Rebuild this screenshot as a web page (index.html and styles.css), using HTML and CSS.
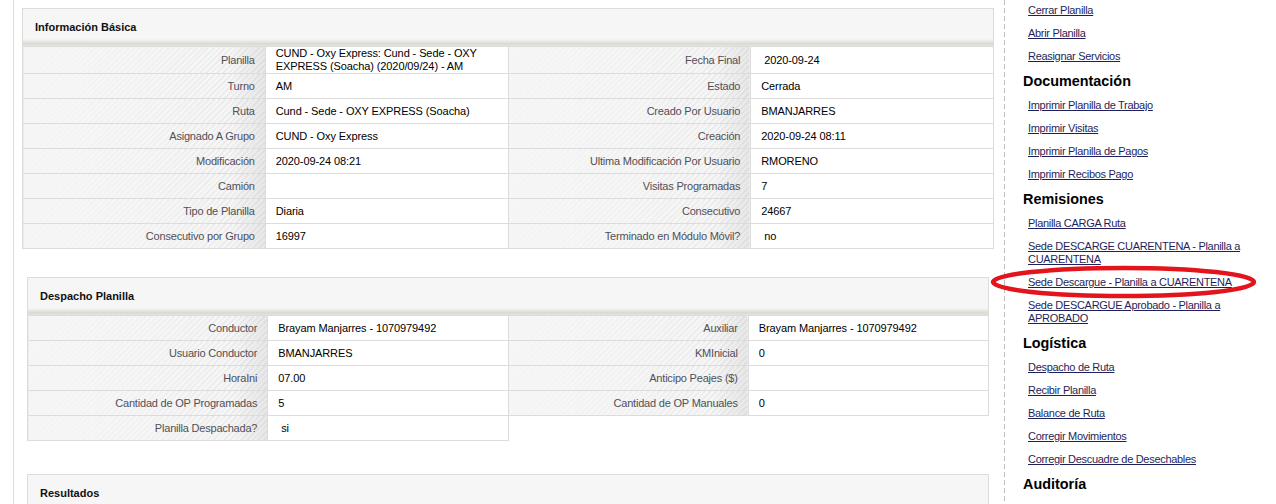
FILE: index.html
```html
<!DOCTYPE html>
<html lang="es">
<head>
<meta charset="utf-8">
<title>Planilla</title>
<link rel="stylesheet" href="styles.css">
</head>
<body>
<div class="layout">
  <main class="main">
    <section class="panel panel-basic">
      <div class="panel-header">Información Básica</div>
      <table class="info">
        <tr>
          <td class="label">Planilla</td>
          <td class="value">CUND - Oxy Express: Cund - Sede - OXY EXPRESS (Soacha) (2020/09/24) - AM</td>
          <td class="label">Fecha Final</td>
          <td class="value">&nbsp;2020-09-24</td>
        </tr>
        <tr>
          <td class="label">Turno</td>
          <td class="value">AM</td>
          <td class="label">Estado</td>
          <td class="value">Cerrada</td>
        </tr>
        <tr>
          <td class="label">Ruta</td>
          <td class="value">Cund - Sede - OXY EXPRESS (Soacha)</td>
          <td class="label">Creado Por Usuario</td>
          <td class="value">BMANJARRES</td>
        </tr>
        <tr>
          <td class="label">Asignado A Grupo</td>
          <td class="value">CUND - Oxy Express</td>
          <td class="label">Creación</td>
          <td class="value">2020-09-24 08:11</td>
        </tr>
        <tr>
          <td class="label">Modificación</td>
          <td class="value">2020-09-24 08:21</td>
          <td class="label">Ultima Modificación Por Usuario</td>
          <td class="value">RMORENO</td>
        </tr>
        <tr>
          <td class="label">Camión</td>
          <td class="value"></td>
          <td class="label">Visitas Programadas</td>
          <td class="value">7</td>
        </tr>
        <tr>
          <td class="label">Tipo de Planilla</td>
          <td class="value">Diaria</td>
          <td class="label">Consecutivo</td>
          <td class="value">24667</td>
        </tr>
        <tr>
          <td class="label">Consecutivo por Grupo</td>
          <td class="value">16997</td>
          <td class="label">Terminado en Módulo Móvil?</td>
          <td class="value">&nbsp;no</td>
        </tr>
      </table>
    </section>

    <section class="panel panel-dispatch">
      <div class="panel-header">Despacho Planilla</div>
      <table class="info">
        <tr>
          <td class="label">Conductor</td>
          <td class="value">Brayam Manjarres - 1070979492</td>
          <td class="label">Auxiliar</td>
          <td class="value">Brayam Manjarres - 1070979492</td>
        </tr>
        <tr>
          <td class="label">Usuario Conductor</td>
          <td class="value">BMANJARRES</td>
          <td class="label">KMInicial</td>
          <td class="value">0</td>
        </tr>
        <tr>
          <td class="label">HoraIni</td>
          <td class="value">07.00</td>
          <td class="label">Anticipo Peajes ($)</td>
          <td class="value"></td>
        </tr>
        <tr>
          <td class="label">Cantidad de OP Programadas</td>
          <td class="value">5</td>
          <td class="label">Cantidad de OP Manuales</td>
          <td class="value">0</td>
        </tr>
        <tr>
          <td class="label">Planilla Despachada?</td>
          <td class="value">&nbsp;si</td>
        </tr>
      </table>
    </section>

    <section class="panel panel-results">
      <div class="panel-header">Resultados</div>
    </section>
  </main>

  <nav class="sidebar">
    <a class="side-link" href="#">Cerrar Planilla</a>
    <a class="side-link" href="#">Abrir Planilla</a>
    <a class="side-link" href="#">Reasignar Servicios</a>
    <h3 class="side-title">Documentación</h3>
    <a class="side-link" href="#">Imprimir Planilla de Trabajo</a>
    <a class="side-link" href="#">Imprimir Visitas</a>
    <a class="side-link" href="#">Imprimir Planilla de Pagos</a>
    <a class="side-link" href="#">Imprimir Recibos Pago</a>
    <h3 class="side-title">Remisiones</h3>
    <a class="side-link" href="#">Planilla CARGA Ruta</a>
    <a class="side-link" href="#">Sede DESCARGE CUARENTENA - Planilla a CUARENTENA</a>
    <a class="side-link circled" href="#">Sede Descargue - Planilla a CUARENTENA<svg class="mark" viewBox="0 0 272 40" width="272" height="40" aria-hidden="true"><ellipse cx="135.5" cy="20" rx="130.5" ry="14" fill="none" stroke="#e3141c" stroke-width="4.5"/></svg></a>
    <a class="side-link" href="#">Sede DESCARGUE Aprobado - Planilla a APROBADO</a>
    <h3 class="side-title">Logística</h3>
    <a class="side-link" href="#">Despacho de Ruta</a>
    <a class="side-link" href="#">Recibir Planilla</a>
    <a class="side-link" href="#">Balance de Ruta</a>
    <a class="side-link" href="#">Corregir Movimientos</a>
    <a class="side-link" href="#">Corregir Descuadre de Desechables</a>
    <h3 class="side-title">Auditoría</h3>
    <a class="side-link" href="#">Ver Histórico</a>
  </nav>
</div>
</body>
</html>
```

FILE: styles.css
```css
html, body {
  margin: 0;
  padding: 0;
  background: #ffffff;
  overflow: hidden;
}

body {
  font-family: "Liberation Sans", Arial, sans-serif;
  color: #000;
}

.layout {
  display: flex;
  align-items: stretch;
  min-height: 504px;
}

.main {
  flex: none;
  width: 990px;
  margin-left: 13px;
  border-left: 1px solid #dcdcdc;
  padding-top: 8px;
}

.panel-basic {
  margin: 0 10px 0 8px;
}

.panel-dispatch {
  margin: 28px 15px 0 13px;
}

.panel-results {
  margin: 33px 15px 0 13px;
}

.panel-header {
  height: 37px;
  line-height: 36px;
  padding-left: 12px;
  border: 1px solid #dcdcdc;
  border-bottom: 0;
  font-size: 11px;
  font-weight: bold;
  color: #111;
  background: linear-gradient(to bottom,
    #f6f6f6 0,
    #f6f6f6 30px,
    #ebebe7 32px,
    #d9d9d1 35px,
    #e6e6e2 37px);
}

.info {
  width: 100%;
  table-layout: fixed;
  border-collapse: collapse;
  font-size: 11px;
}

.info td {
  border: 1px solid #dcdcdc;
  height: 24px;
  padding: 0 10px;
  line-height: 13px;
  vertical-align: middle;
}

.label {
  text-align: right;
  color: #505058;
  letter-spacing: -0.2px;
  background-color: #f3f3f3;
  background-image:
    linear-gradient(to right, rgba(246, 246, 246, 0.85) 0, rgba(246, 246, 246, 0.55) 50%, rgba(246, 246, 246, 0) 85%, rgba(0, 0, 0, 0.06) 100%),
    repeating-linear-gradient(135deg, #f8f8f8 0, #f8f8f8 2px, #eaeaea 2px, #eaeaea 4px);
}

.value {
  color: #000;
  letter-spacing: -0.1px;
  background: #fff;
}

.sidebar {
  flex: 1;
  padding: 4px 12px 0 19px;
  background-image: linear-gradient(to bottom, #bdbdbd 5px, transparent 5px);
  background-size: 1px 8px;
  background-repeat: repeat-y;
  background-position: 0 0;
}

.side-title {
  margin: 0 0 9px;
  font-size: 14.4px;
  line-height: 17px;
  font-weight: bold;
  color: #000;
}

.side-link {
  display: block;
  margin: 0 0 10px 5px;
  font-size: 11px;
  line-height: 13px;
  letter-spacing: -0.3px;
  color: #1f1f5c;
  text-decoration: underline;
}

.circled {
  position: relative;
}

.mark {
  position: absolute;
  left: -40px;
  top: -14px;
  pointer-events: none;
}
```
